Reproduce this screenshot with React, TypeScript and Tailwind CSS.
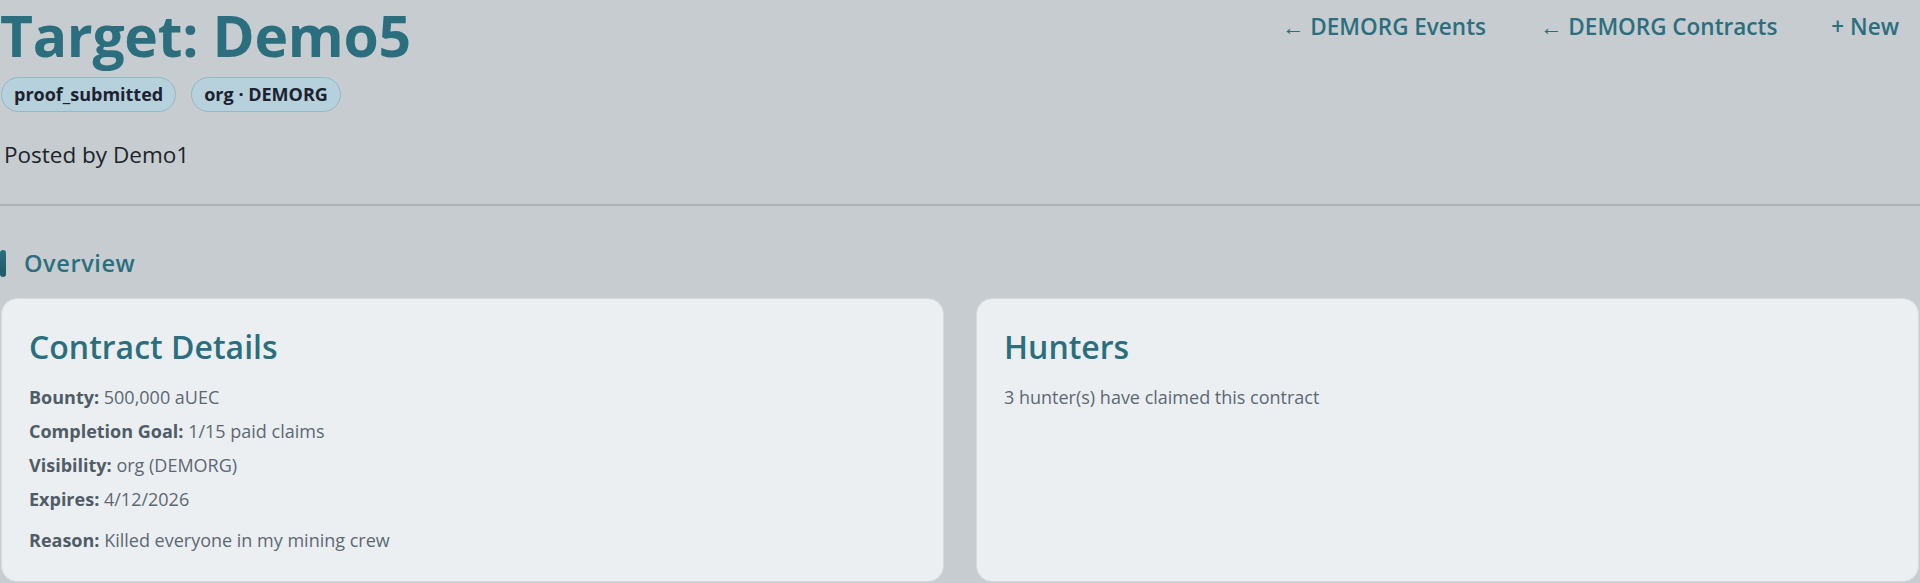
import React from "react";

const font = { fontFamily: '"Open Sans", "Noto Sans", sans-serif' };

function Badge({ children }: { children: React.ReactNode }) {
  return (
    <span className="inline-flex h-[35px] items-center rounded-full border border-[#93b8c7] bg-[#b6d1dc] px-[12px] text-[18px] font-bold text-[#1c2230]">
      {children}
    </span>
  );
}

function Row({ label, value, className = "" }: { label: string; value: string; className?: string }) {
  return (
    <p className={"text-[18px] leading-[34px] text-[#5d6872] " + className}>
      <span className="font-bold text-[#505c66]">{label}</span> {value}
    </p>
  );
}

export default function App() {
  return (
    <div style={font} className="min-h-[583px] w-full overflow-hidden bg-[#c7ccd0]">
      <header className="flex items-start justify-between">
        <div>
          <h1 className="text-[57px] font-bold leading-[70px] tracking-[-0.3px] text-[#2b6f7e]">
            Target: Demo5
          </h1>
          <div className="mt-[7px] flex gap-[15px] pl-px">
            <Badge>proof_submitted</Badge>
            <Badge>org · DEMORG</Badge>
          </div>
          <p className="mt-[28px] pl-[4px] text-[22.5px] leading-[30px] text-[#20242a]">Posted by Demo1</p>
        </div>
        <nav className="flex gap-[54px] pr-[21px] pt-[12px] text-[22.5px] font-semibold leading-[30px] text-[#2b6f7e]">
          <a>← DEMORG Events</a>
          <a>← DEMORG Contracts</a>
          <a>+ New</a>
        </nav>
      </header>

      <hr className="mt-[34px] border-t-2 border-[#adb2b7]" />

      <section className="pt-[42px]">
        <h2 className="flex items-center gap-[18px] text-[23.5px] font-semibold leading-[30px] tracking-[0.6px] text-[#2b6f7e]">
          <span className="h-[27px] w-[6px] rounded-[3px] bg-gradient-to-b from-[#2b6f7e] to-[#1f5a68]" />
          Overview
        </h2>

        <div className="mt-[20px] grid grid-cols-2 gap-[32px] px-px">
          <div className="rounded-[16px] border border-[#d6dbdf] bg-[#ebeff2] px-[27px] pb-[24px] pt-[25px]">
            <h3 className="mb-[10px] text-[32px] font-semibold leading-[46px] text-[#2b6f7e]">Contract Details</h3>
            <Row label="Bounty:" value="500,000 aUEC" />
            <Row label="Completion Goal:" value="1/15 paid claims" />
            <Row label="Visibility:" value="org (DEMORG)" />
            <Row label="Expires:" value="4/12/2026" />
            <Row label="Reason:" value="Killed everyone in my mining crew" className="mt-[7px]" />
          </div>
          <div className="rounded-[16px] border border-[#d6dbdf] bg-[#ebeff2] px-[27px] pb-[24px] pt-[25px]">
            <h3 className="mb-[10px] text-[32px] font-semibold leading-[46px] text-[#2b6f7e]">Hunters</h3>
            <p className="text-[18px] leading-[34px] text-[#5d6872]">3 hunter(s) have claimed this contract</p>
          </div>
        </div>
      </section>
    </div>
  );
}
